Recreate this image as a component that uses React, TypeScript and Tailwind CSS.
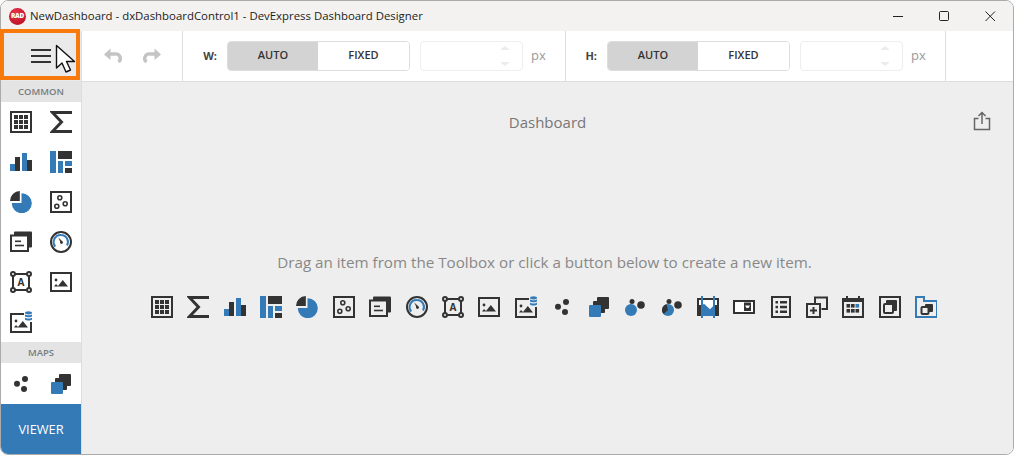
const D = "#333333";
const B = "#337ab7";
const BG = "#eeeeee";

type IconProps = { bg?: string };
function S({ children }: { children: React.ReactNode }) {
  return (
    <svg width="22" height="22" viewBox="0 0 22 22" className="shrink-0 block">
      {children}
    </svg>
  );
}

function Grid() {
  const c = [4, 9, 14];
  return (
    <S>
      <rect x="1" y="1" width="20" height="20" fill="none" stroke={D} strokeWidth="2" />
      {c.map((x) => c.map((y) => <rect key={`${x}-${y}`} x={x} y={y} width="4" height="4" fill={D} />))}
    </S>
  );
}
function Sigma() {
  return (
    <S>
      <path d="M22 1.5H2.5L11.5 11L2.5 20.5H22" fill="none" stroke={D} strokeWidth="3" />
    </S>
  );
}
function Bars() {
  return (
    <S>
      <rect x="0" y="13" width="5" height="7" fill={B} />
      <rect x="5" y="6" width="5" height="14" fill={D} />
      <rect x="12" y="2" width="5" height="18" fill={B} />
      <rect x="17" y="9" width="5" height="11" fill={D} />
    </S>
  );
}
function Treemap() {
  return (
    <S>
      <rect x="0" y="0" width="6" height="22" fill={B} />
      <rect x="8" y="0" width="14" height="8" fill={D} />
      <rect x="8" y="10" width="5" height="12" fill={B} />
      <rect x="15" y="10" width="7" height="5" fill={B} />
      <rect x="15" y="17" width="7" height="5" fill={D} />
    </S>
  );
}
function Pie() {
  return (
    <S>
      <path d="M11.5 2.2A10 10 0 1 1 1.8 12H11.5Z" fill={B} />
      <path d="M9.8 0V10H0A10 10 0 0 1 9.8 0Z" fill={D} />
    </S>
  );
}
function Scatter() {
  return (
    <S>
      <rect x="1" y="1" width="20" height="20" fill="none" stroke={D} strokeWidth="2" />
      <g fill="none" stroke={D} strokeWidth="1.6">
        <circle cx="9.8" cy="6.8" r="2" />
        <circle cx="15.2" cy="12.8" r="2" />
        <circle cx="6.8" cy="15.2" r="2" />
      </g>
    </S>
  );
}
function Cards({ bg }: IconProps) {
  return (
    <S>
      <rect x="4" y="0.5" width="18" height="16" rx="1" fill={D} />
      <rect x="1" y="4.5" width="17" height="15.5" fill={bg} stroke={D} strokeWidth="2" />
      <rect x="5" y="9.5" width="6" height="1.6" fill={D} />
      <rect x="5" y="13.7" width="9" height="1.6" fill={D} />
    </S>
  );
}
function Gauge() {
  return (
    <S>
      <circle cx="11" cy="11" r="10" fill="none" stroke={D} strokeWidth="2" />
      <path d="M5.3 15.5A7 7 0 0 1 11 4A7 7 0 0 1 17 14.5" fill="none" stroke={B} strokeWidth="2" />
      <path d="M8.3 6.5L12.3 10.2L10.8 12Z" fill={D} />
      <circle cx="11.5" cy="11.5" r="1.4" fill={D} />
    </S>
  );
}
function TextBox({ bg }: IconProps) {
  return (
    <S>
      <rect x="3" y="3" width="16" height="16" fill="none" stroke={D} strokeWidth="2" />
      {[
        [3, 3],
        [19, 3],
        [3, 19],
        [19, 19],
      ].map(([x, y]) => (
        <circle key={`${x}${y}`} cx={x} cy={y} r="2" fill={bg} stroke={D} strokeWidth="2" />
      ))}
      <text x="11" y="14.5" textAnchor="middle" fontSize="10" fontWeight="700" fill={D} fontFamily="'Open Sans', sans-serif">
        A
      </text>
    </S>
  );
}
function Picture() {
  return (
    <S>
      <rect x="1" y="2" width="20" height="18" fill="none" stroke={D} strokeWidth="2" />
      <circle cx="6" cy="9" r="1.4" fill={D} />
      <path d="M4 15.5L6 13L8 15L12.8 9L18 15.5Z" fill={D} />
    </S>
  );
}
function PictureData() {
  return (
    <S>
      <path d="M14 3H1V21H21V11" fill="none" stroke={D} strokeWidth="2" />
      <circle cx="6" cy="10" r="1.4" fill={D} />
      <path d="M4 16.5L6 14L8 16L12.8 10L18 16.5Z" fill={D} />
      <g fill={B}>
        <ellipse cx="18.5" cy="1.8" rx="3.5" ry="1.6" />
        <path d="M15 3.2C16 4.6 21 4.6 22 3.2V5.2C21 6.6 16 6.6 15 5.2Z" />
        <path d="M15 6.4C16 7.8 21 7.8 22 6.4V8.4C21 9.8 16 9.8 15 8.4Z" />
      </g>
    </S>
  );
}
function DotsMap() {
  return (
    <S>
      <circle cx="7" cy="10.7" r="3" fill={D} />
      <circle cx="15" cy="6" r="3" fill={D} />
      <circle cx="14" cy="16" r="3" fill={D} />
    </S>
  );
}
function Choropleth() {
  return (
    <S>
      <rect x="9" y="1" width="12" height="12" rx="1" fill={D} />
      <rect x="5" y="5" width="12" height="12" rx="1" fill={D} />
      <rect x="1" y="9" width="12" height="12" rx="1" fill={B} />
    </S>
  );
}
function BubbleMap() {
  return (
    <S>
      <circle cx="7" cy="14" r="6" fill={B} />
      <circle cx="17" cy="9" r="3.8" fill={D} />
      <circle cx="8" cy="5.5" r="2.5" fill={D} />
    </S>
  );
}
function PieMap() {
  return (
    <S>
      <circle cx="8" cy="14" r="6" fill={B} />
      <path d="M8 14L6.5 8.2A6 6 0 0 0 3.5 18Z" fill={D} />
      <circle cx="18" cy="9" r="3.8" fill={D} />
      <circle cx="9" cy="5.5" r="2.5" fill={D} />
    </S>
  );
}
function Range() {
  return (
    <S>
      <rect x="1" y="3" width="20" height="16" fill="#ffffff" stroke={D} strokeWidth="2" />
      <rect x="0" y="9" width="5" height="11" fill={D} />
      <rect x="17" y="9" width="5" height="11" fill={D} />
      <path d="M5 9.5L7 7.7L13 13.3L17 9.3V20H5Z" fill={B} />
      <rect x="4" y="0" width="2" height="22" fill={B} />
      <rect x="16" y="0" width="2" height="22" fill={B} />
    </S>
  );
}
function DateFilter() {
  return (
    <S>
      <rect x="1" y="5" width="20" height="12" fill="#ffffff" stroke={D} strokeWidth="2" />
      <rect x="11" y="6.5" width="7" height="8.5" fill={D} />
      <path d="M12 9.5H17L15.5 12H13.5Z" fill="#ffffff" />
    </S>
  );
}
function ListBox() {
  return (
    <S>
      <rect x="2" y="1" width="18" height="20" fill="none" stroke={D} strokeWidth="2" />
      <g fill={D}>
        <rect x="5.5" y="5" width="2.5" height="2.5" />
        <rect x="10" y="5" width="7" height="2.5" />
        <rect x="5.5" y="9.8" width="2.5" height="2.5" />
        <rect x="10" y="9.8" width="7" height="2.5" />
        <rect x="5.5" y="14.5" width="2.5" height="2.5" />
        <rect x="10" y="14.5" width="7" height="2.5" />
      </g>
    </S>
  );
}
function Combo({ bg }: IconProps) {
  return (
    <S>
      <path d="M9 7V1.5H21V13H15.5" fill="none" stroke={D} strokeWidth="2" />
      <rect x="1" y="8" width="13" height="13" fill={bg} stroke={D} strokeWidth="2" />
      <rect x="4" y="13.5" width="7" height="2" fill={D} />
      <rect x="6.5" y="11" width="2" height="7" fill={D} />
    </S>
  );
}
function Calendar() {
  const xs = [4.5, 9, 13.5];
  const ys = [8, 13];
  return (
    <S>
      <rect x="1" y="3" width="20" height="18" fill="none" stroke={D} strokeWidth="2" />
      <rect x="1" y="3" width="20" height="3" fill={D} />
      <rect x="4" y="0" width="2" height="5" fill={D} />
      <rect x="16" y="0" width="2" height="5" fill={D} />
      {xs.map((x, i) =>
        ys.map((y, j) => (
          <rect key={`${i}${j}`} x={x} y={y} width="3.6" height="3.6" fill={i === 2 && j === 0 ? B : D} />
        )),
      )}
    </S>
  );
}
function Tabs({ bg }: IconProps) {
  return (
    <S>
      <rect x="1" y="1" width="20" height="20" fill="none" stroke={D} strokeWidth="2" />
      <rect x="7" y="4" width="11" height="11" rx="1" fill={D} />
      <rect x="5" y="8" width="9" height="9" rx="1" fill={bg} stroke={D} strokeWidth="2" />
    </S>
  );
}
function Group({ bg }: IconProps) {
  return (
    <S>
      <path d="M1 1H9V5H22V21H1Z" fill="none" stroke={B} strokeWidth="2" />
      <rect x="10" y="8" width="8" height="8" rx="1" fill={D} />
      <rect x="6.5" y="11" width="7" height="7" rx="1" fill={bg} stroke={D} strokeWidth="2" />
    </S>
  );
}

function Stepper() {
  return (
    <div className="flex flex-col items-center gap-[12px] mr-[12px]">
      <div className="w-0 h-0 border-x-[5px] border-x-transparent border-b-[4px] border-b-[#ececec]" />
      <div className="w-0 h-0 border-x-[5px] border-x-transparent border-t-[4px] border-t-[#ececec]" />
    </div>
  );
}

function SizeGroup({ label, wide }: { label: string; wide?: boolean }) {
  return (
    <div className={`flex items-center h-full border-r border-[#dddddd] ${wide ? "w-[383px]" : "w-[380px]"}`}>
      <span className={`pr-[10px] text-right text-[11px] font-bold text-[#444444] ${wide ? "w-[44px]" : "w-[41px]"}`}>{label}</span>
      <div className="flex w-[183px] h-[30px] rounded-[4px] border border-[#dddddd] overflow-hidden text-[11px] font-semibold text-[#333333]">
        <div className="w-[90px] pb-[1px] flex items-center justify-center bg-[#d3d3d3]">AUTO</div>
        <div className="flex-1 pb-[1px] flex items-center justify-center bg-white">FIXED</div>
      </div>
      <div className="ml-[10px] w-[103px] h-[30px] rounded-[4px] border border-[#eeeeee] flex items-center justify-end">
        <Stepper />
      </div>
      <span className="ml-[8px] text-[13px] text-[#999999]">px</span>
    </div>
  );
}

export default function App() {
  const main = [
    <Grid />,
    <Sigma />,
    <Bars />,
    <Treemap />,
    <Pie />,
    <Scatter />,
    <Cards bg={BG} />,
    <Gauge />,
    <TextBox bg={BG} />,
    <Picture />,
    <PictureData />,
    <DotsMap />,
    <Choropleth />,
    <BubbleMap />,
    <PieMap />,
    <Range />,
    <DateFilter />,
    <ListBox />,
    <Combo bg={BG} />,
    <Calendar />,
    <Tabs bg={BG} />,
    <Group bg={BG} />,
  ];
  const common = [
    <Grid />,
    <Sigma />,
    <Bars />,
    <Treemap />,
    <Pie />,
    <Scatter />,
    <Cards bg="#fff" />,
    <Gauge />,
    <TextBox bg="#fff" />,
    <Picture />,
    <PictureData />,
  ];
  const sectionHead =
    "h-[21px] shrink-0 pt-[2px] bg-[#e4e4e4] flex items-center justify-center text-[9.5px] font-semibold text-[#777c82]";
  return (
    <div className="relative w-[1014px] h-[455px] bg-white overflow-hidden font-['Open_Sans','Noto_Sans',sans-serif]">
      <div className="w-full h-full flex flex-col border border-[#ababab] rounded-t-[8px] rounded-b-[8px] overflow-hidden">
        <header className="h-[30px] shrink-0 bg-[#f3f2f1] flex items-center">
          <div className="ml-[8px] w-[17px] h-[17px] rounded-full bg-[radial-gradient(circle_at_40%_30%,#e8344a,#b00a1e)] flex items-center justify-center text-[6.5px] font-extrabold text-white tracking-tighter shrink-0">
            RAD
          </div>
          <span className="ml-[4px] text-[11.4px] text-[#1c1c1c] whitespace-nowrap">
            NewDashboard - dxDashboardControl1 - DevExpress Dashboard Designer
          </span>
          <div className="ml-auto flex items-center h-full">
            <svg width="46" height="30" viewBox="0 0 46 30" className="block">
              <path d="M18 15.5H28" stroke="#222" strokeWidth="1" />
            </svg>
            <svg width="46" height="30" viewBox="0 0 46 30" className="block">
              <rect x="18.5" y="10.5" width="9" height="9" rx="1" fill="none" stroke="#222" strokeWidth="1" />
            </svg>
            <svg width="46" height="30" viewBox="0 0 46 30" className="block">
              <path d="M18.5 10.5L28 20M28 10.5L18.5 20" stroke="#222" strokeWidth="1" fill="none" />
            </svg>
          </div>
        </header>
        <div className="flex-1 flex min-h-0">
          <aside className="w-[81px] shrink-0 flex flex-col bg-white border-r border-[#dddddd]">
            <div className="h-[50px] shrink-0 bg-[#eaeaea] flex items-center justify-center pr-[1px]">
              <div className="flex flex-col gap-[4px] w-[20px]">
                <div className="h-[2px] bg-[#333333]" />
                <div className="h-[2px] bg-[#333333]" />
                <div className="h-[2px] bg-[#333333]" />
              </div>
            </div>
            <div className={sectionHead}>COMMON</div>
            <div className="grid grid-cols-[22px_22px] pl-[9px] gap-x-[18px] gap-y-[18px] py-[9px] shrink-0">
              {common.map((ic, i) => (
                <div key={i}>{ic}</div>
              ))}
            </div>
            <div className={sectionHead}>MAPS</div>
            <div className="flex-1 flex items-center pl-[9px] gap-[18px]">
              <DotsMap />
              <Choropleth />
            </div>
            <div className="h-[50px] shrink-0 pt-[1px] bg-[#337ab7] text-white text-[12.8px] font-medium flex items-center justify-center">
              VIEWER
            </div>
          </aside>
          <div className="flex-1 min-w-0 flex flex-col">
            <div className="h-[51px] shrink-0 bg-white border-b border-[#dddddd] flex items-center">
              <div className="w-[101px] h-full border-r border-[#dddddd] flex items-center justify-center gap-[21px]">
                <svg width="18" height="16" viewBox="0 0 18 16">
                  <path d="M5 6H11A4.5 4.5 0 0 1 14.5 14" fill="none" stroke="#c4c4c4" strokeWidth="3.4" />
                  <path d="M0 6.5L6.5 0.5V12Z" fill="#c4c4c4" />
                </svg>
                <svg width="18" height="16" viewBox="0 0 18 16">
                  <path d="M13 6H7A4.5 4.5 0 0 0 3.5 14" fill="none" stroke="#c4c4c4" strokeWidth="3.4" />
                  <path d="M18 6.5L11.5 0.5V12Z" fill="#c4c4c4" />
                </svg>
              </div>
              <SizeGroup label="W:" wide />
              <SizeGroup label="H:" />
            </div>
            <main className="flex-1 min-h-0 bg-[#eeeeee] flex flex-col relative">
              <div className="h-[80px] shrink-0 flex items-center justify-center relative">
                <span className="text-[15px] text-[#777777]">Dashboard</span>
                <svg width="18" height="20" viewBox="0 0 18 20" className="absolute right-[22px] top-[29px]">
                  <path d="M5.5 7.5H1.5V18.5H16.5V7.5H12.5" fill="none" stroke="#666" strokeWidth="1.5" />
                  <path d="M9 13V2M5.5 5L9 1.5L12.5 5" fill="none" stroke="#666" strokeWidth="1.5" />
                </svg>
              </div>
              <p className="mt-[90px] pr-[6px] text-center text-[15.2px] text-[#888888] leading-[20px] whitespace-nowrap">
                Drag an item from the Toolbox or click a button below to create a new item.
              </p>
              <div className="mt-[24px] pr-[7px] flex justify-center gap-[14.4px]">
                {main.map((ic, i) => (
                  <div key={i}>{ic}</div>
                ))}
              </div>
            </main>
          </div>
        </div>
      </div>
      <div className="absolute left-0 top-[29px] w-[80px] h-[51px] border-[4px] border-[#f97a0c]" />
      <svg width="22" height="30" viewBox="0 0 22 30" className="absolute left-[55px] top-[44px]">
        <path d="M1.5 1.5V24L7 19L11 28L15.5 26L11.5 17.5H19.5Z" fill="#fff" stroke="#111" strokeWidth="1.4" strokeLinejoin="round" />
      </svg>
    </div>
  );
}
